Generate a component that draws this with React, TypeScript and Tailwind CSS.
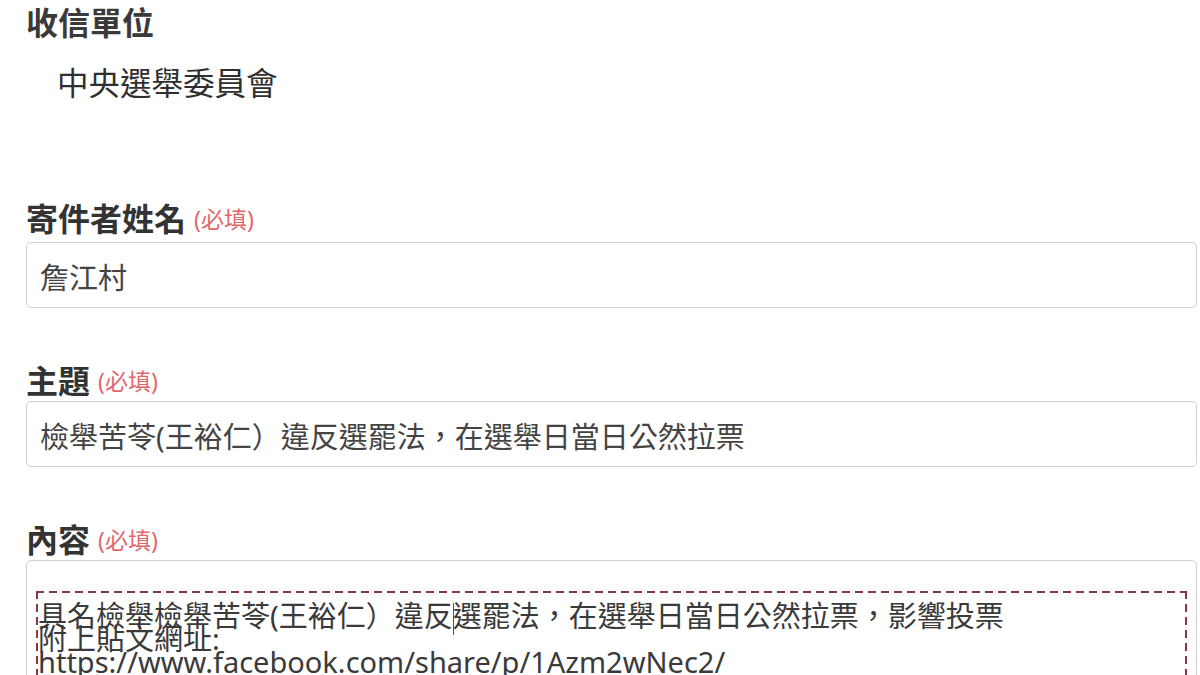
import React from 'react'

const FONT = {fontFamily: '"Noto Sans", "Noto Sans CJK TC", sans-serif'}

function Required() {
    return <span className="ml-[8px] text-[23px] font-normal text-[#e0686c]">(必填)</span>
}

function Label({children, required}: {children: React.ReactNode; required?: boolean}) {
    return (
        <div className="flex h-[40px] items-center whitespace-nowrap text-[32px] font-bold leading-[40px] text-[#333]">
            {children}
            {required && <Required />}
        </div>
    )
}

function TextBox({value}: {value: string}) {
    return (
        <div className="flex h-[66px] items-center rounded-[5px] border border-[#cfcfcf] bg-white pl-[13px] pt-[5px] text-[29px] text-[#444]">
            {value}
        </div>
    )
}

export default function App() {
    return (
        <div className="h-[675px] w-[1200px] overflow-hidden bg-white" style={FONT}>
            <div className="w-[1197px] pl-[26px]">
                <div className="h-[46px] text-[32px] font-bold leading-[46px] text-[#3a3a3a]">收信單位</div>
                <div className="mt-[14px] h-[46px] pl-[31px] text-[31.5px] leading-[46px] text-[#2f2f2f]">中央選舉委員會</div>

                <div className="mt-[93px]">
                    <Label required>寄件者姓名</Label>
                    <div className="mt-[3px]">
                        <TextBox value="詹江村" />
                    </div>
                </div>

                <div className="mt-[53px]">
                    <Label required>主題</Label>
                    <TextBox value="檢舉苦苓(王裕仁）違反選罷法，在選舉日當日公然拉票" />
                </div>

                <div className="mt-[53px]">
                    <Label required>內容</Label>
                    <div className="h-[220px] rounded-[5px] border border-[#cfcfcf] bg-white px-[9px] pt-[30px]">
                        {/* dashed frame drawn with gradients: longer dashes than border-dashed gives */}
                        <div className="h-[200px] pl-[2px] pt-[13px] text-[29px] leading-[23px] text-[#3a3a3a] [background:repeating-linear-gradient(90deg,#84384a_0_8px,transparent_8px_13px)_top/100%_2px_no-repeat,repeating-linear-gradient(180deg,#84384a_0_8px,transparent_8px_13px)_left/2px_100%_no-repeat,repeating-linear-gradient(180deg,#84384a_0_8px,transparent_8px_13px)_right/2px_100%_no-repeat]">
                            <div className="whitespace-nowrap">
                                具名檢舉檢舉苦苓(王裕仁）違反
                                <span className="relative">
                                    <span className="absolute left-0 top-[7px] h-[32px] w-px bg-[#555]" />
                                </span>
                                選罷法，在選舉日當日公然拉票，影響投票
                            </div>
                            <div className="whitespace-nowrap">附上貼文網址:</div>
                            <div className="whitespace-nowrap">https://www.facebook.com/share/p/1Azm2wNec2/</div>
                        </div>
                    </div>
                </div>
            </div>
        </div>
    )
}
